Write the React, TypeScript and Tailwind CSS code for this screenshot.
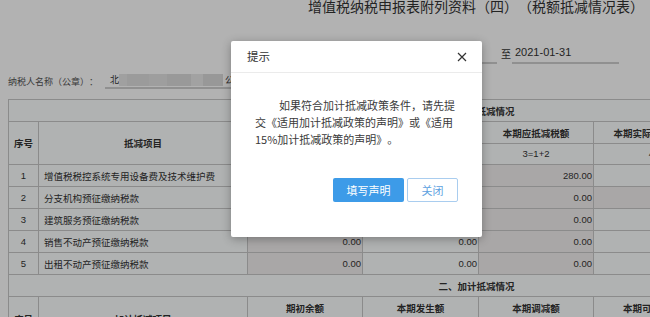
import React from 'react'

type Row = { no: number; name: string; vals: string[]; ro: boolean[] }

const rows: Row[] = [
    { no: 1, name: '增值税税控系统专用设备费及技术维护费', vals: ['0.00', '280.00', '280.00', '0.00', '280.00'], ro: [true, false, true, false, true] },
    { no: 2, name: '分支机构预征缴纳税款', vals: ['0.00', '0.00', '0.00', '0.00', '0.00'], ro: [true, false, true, true, true] },
    { no: 3, name: '建筑服务预征缴纳税款', vals: ['0.00', '0.00', '0.00', '0.00', '0.00'], ro: [true, false, true, false, true] },
    { no: 4, name: '销售不动产预征缴纳税款', vals: ['0.00', '0.00', '0.00', '0.00', '0.00'], ro: [true, false, true, false, true] },
    { no: 5, name: '出租不动产预征缴纳税款', vals: ['0.00', '0.00', '0.00', '0.00', '0.00'], ro: [true, false, true, false, true] },
]

const td = 'border border-[#c8c8c8] p-0'

const App = () => {
    return (
        <div className="relative w-[650px] h-[317px] overflow-hidden bg-white font-['Noto_Sans_CJK_SC',sans-serif] text-[#333] [text-spacing-trim:space-all]">
            <div className="w-[952px] px-[8px]">
                <h1 className="mt-[-1px] text-center text-[14px] leading-[14px] text-[#333] font-normal">
                    增值税纳税申报表附列资料（四）（税额抵减情况表）
                </h1>

                <div className="mt-[31px] ml-[382px] flex items-end text-[11px]">
                    <div className="w-[107px] h-[20px] border-b-2 border-[#cfcfcf]" />
                    <span className="ml-[4px] mb-[4px] text-[10px] leading-[12px]">至</span>
                    <div className="ml-[1px] w-[107px] h-[20px] border-b-2 border-[#cfcfcf] pl-[3px] font-['Liberation_Sans',sans-serif] leading-[17px]">
                        2021-01-31
                    </div>
                </div>

                <div className="mt-[8px] flex items-end">
                    <span className="text-[9px] leading-[15px] text-[#555]">纳税人名称（公章）：</span>
                    <div className="ml-[7px] w-[230px] h-[17px] border-b-2 border-[#cfcfcf] flex items-center pl-[5px] text-[9px]">
                        <span>北</span>
                        <div className="flex h-[12px] w-[104px]">
                            <div className="w-[8px] bg-[#e6e6e6]" />
                            <div className="w-[22px] bg-[#dedede]" />
                            <div className="w-[18px] bg-[#e3e3e3]" />
                            <div className="w-[24px] bg-[#dcdcdc]" />
                            <div className="w-[12px] bg-[#e8e8e8]" />
                            <div className="w-[20px] bg-[#dadada]" />
                        </div>
                        <span className="ml-[2px]">公</span>
                    </div>
                </div>

                <table className="mt-[10px] w-[936px] table-fixed border-collapse bg-[#fcffff] text-[9.5px] leading-[12px] text-[#333]">
                    <colgroup>
                        <col className="w-[30px]" />
                        <col className="w-[209px]" />
                        <col className="w-[115px]" />
                        <col className="w-[116px]" />
                        <col className="w-[115px]" />
                        <col className="w-[116px]" />
                        <col className="w-[115px]" />
                        <col className="w-[120px]" />
                    </colgroup>
                    <tbody>
                        <tr className="h-[22px]">
                            <td colSpan={8} className={`${td} text-center font-bold`}>一、税额抵减情况</td>
                        </tr>
                        <tr className="h-[22px] font-bold">
                            <td rowSpan={2} className={`${td} text-center`}>序号</td>
                            <td rowSpan={2} className={`${td} text-center`}>抵减项目</td>
                            <td className={`${td} text-center`}>期初余额</td>
                            <td className={`${td} text-center`}>本期发生额</td>
                            <td className={`${td} text-center`}>本期应抵减税额</td>
                            <td className={`${td} text-center`}>本期实际抵减税额</td>
                            <td colSpan={2} className={`${td} text-center`}>期末余额</td>
                        </tr>
                        <tr className="h-[21px] font-['Liberation_Sans','Noto_Sans_CJK_SC',sans-serif]">
                            <td className={`${td} text-center`}>1</td>
                            <td className={`${td} text-center`}>2</td>
                            <td className={`${td} text-center`}>3=1+2</td>
                            <td className={`${td} text-center`}>4</td>
                            <td colSpan={2} className={`${td} text-center`}>5=3-4</td>
                        </tr>
                        {rows.map((r) => (
                            <tr key={r.no} className="h-[22px]">
                                <td className={`${td} text-center font-['Liberation_Sans',sans-serif]`}>{r.no}</td>
                                <td className={`${td} pl-[5px]`}>{r.name}</td>
                                {r.vals.map((v, i) => (
                                    <td
                                        key={i}
                                        colSpan={i === 4 ? 2 : 1}
                                        className={`${td} pr-[1px] text-right font-['Liberation_Sans',sans-serif] ${r.ro[i] ? 'bg-[#f3f0f0]' : ''}`}
                                    >
                                        {v}
                                    </td>
                                ))}
                            </tr>
                        ))}
                        <tr className="h-[22px]">
                            <td colSpan={8} className={`${td} text-center font-bold`}>二、加计抵减情况</td>
                        </tr>
                        <tr className="h-[23px] font-bold">
                            <td rowSpan={2} className={`${td} text-center`}>序号</td>
                            <td rowSpan={2} className={`${td} text-center`}>加计抵减项目</td>
                            <td className={`${td} text-center`}>期初余额</td>
                            <td className={`${td} text-center`}>本期发生额</td>
                            <td className={`${td} text-center`}>本期调减额</td>
                            <td className={`${td} text-center`}>本期可抵减额</td>
                            <td className={`${td} text-center`}>本期实际抵减额</td>
                            <td className={`${td} text-center`}>期末余额</td>
                        </tr>
                        <tr className="h-[21px]">
                            <td className={`${td} text-center`}>1</td>
                            <td className={`${td} text-center`}>2</td>
                            <td className={`${td} text-center`}>3</td>
                            <td className={`${td} text-center`}>4=1+2-3</td>
                            <td className={`${td} text-center`}>5</td>
                            <td className={`${td} text-center`}>6=4-5</td>
                        </tr>
                    </tbody>
                </table>
            </div>

            {/* mask + dialog */}
            <div className="absolute inset-0 bg-black/30 pl-[231px] pt-[41px]">
                <div className="w-[251px] h-[196px] bg-white rounded-[2px] shadow-[0_2px_10px_rgba(0,0,0,0.3)] flex flex-col">
                    <div className="h-[32px] border-b border-[#ebebeb] flex items-center justify-between pl-[16px] pr-[15px]">
                        <span className="text-[11.5px] text-[#333]">提示</span>
                        <svg width="10" height="10" viewBox="0 0 10 10" className="text-[#333]">
                            <path d="M1 1 L9 9 M9 1 L1 9" stroke="currentColor" strokeWidth="1.2" fill="none" />
                        </svg>
                    </div>
                    <div className="px-[24px] pt-[24px]">
                        <p className="text-[11px] leading-[17px] text-[#3a3a3a] indent-[24px]">
                            如果符合加计抵减政策条件，请先提交《适用加计抵减政策的声明》或《适用15%加计抵减政策的声明》。
                        </p>
                        <div className="mt-[30px] flex justify-end gap-[3px]">
                            <button className="w-[71px] h-[24px] rounded-[2px] bg-[#3d9be8] text-white text-[11px]">填写声明</button>
                            <button className="w-[51px] h-[24px] rounded-[2px] border border-[#a9cdef] bg-white text-[#5ea2df] text-[11px]">关闭</button>
                        </div>
                    </div>
                </div>
            </div>
        </div>
    )
}

export default App
